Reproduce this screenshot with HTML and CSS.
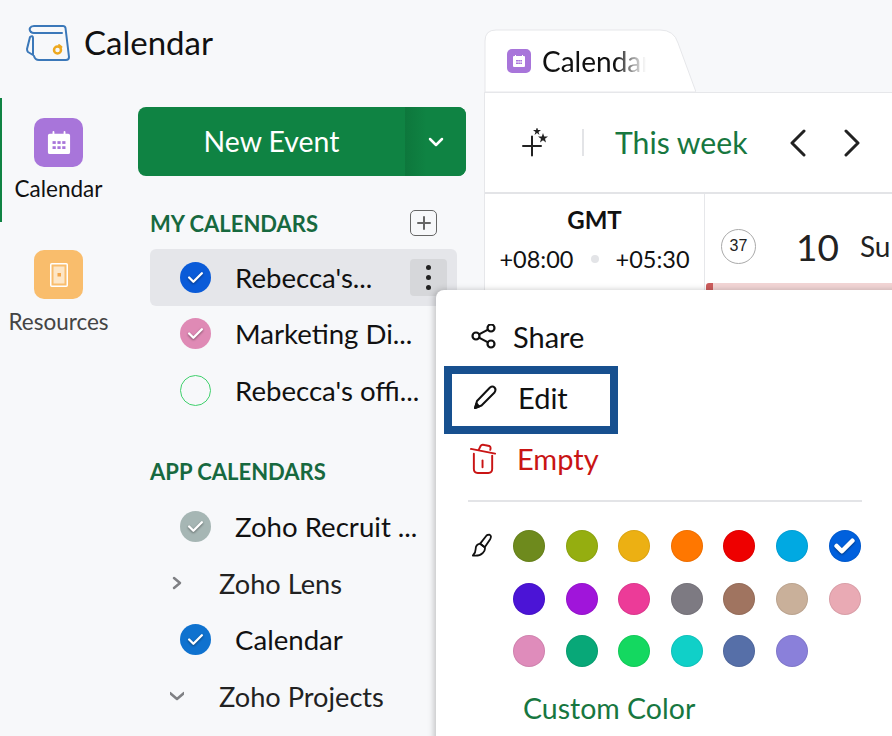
FILE: index.html
```html
<!DOCTYPE html>
<html>

<head>
    <meta charset="UTF-8">
    <title>Calendar</title>
    <link rel="stylesheet" href="styles.css">
</head>

<body>
    <div class="app">
        <div class="left">
            <div class="brand">
                <svg class="brand-logo" viewBox="0 0 44 38" width="44" height="38" fill="none" stroke="#3b78b9" stroke-width="2" stroke-linecap="round" stroke-linejoin="round">
                    <path d="M5 9Q3 7 4 5Q5 3 8 3H37Q39 3 39.500 5L43 34Q43 37 40 37H13Q9 37 8 33" />
                    <path d="M5 9Q6 10 8 10H36" />
                    <path d="M4 14L1 26Q1 28 2 29L7 32V15Q7 12 4 14Z" />
                    <circle cx="31.500" cy="27" r="3.500" stroke="#eda81f" stroke-width="2.500" />
                    <path d="M33 22L35.500 24" stroke="#eda81f" />
                </svg>
                <span class="brand-title">Calendar</span>
            </div>
            <div class="columns">
                <div class="rail">
                    <div class="rail-item active">
                        <div class="rail-icon purple">
                            <svg viewBox="0 0 26 26" width="24" height="24">
                                <path fill="#fff" d="M3 3H6V1Q6 0 7 0T8 1V3H18V1Q18 0 19 0T20 1V3H23Q25 3 25 5V23Q25 25 23 25H3Q1 25 1 23V5Q1 3 3 3Z" />
                                <g fill="#a875da">
                                    <rect x="6" y="11" width="3.500" height="3" />
                                    <rect x="11.300" y="11" width="3.500" height="3" />
                                    <rect x="16.500" y="11" width="3.500" height="3" />
                                    <rect x="6" y="16.500" width="3.500" height="3" />
                                    <rect x="11.300" y="16.500" width="3.500" height="3" />
                                    <rect x="16.500" y="16.500" width="3.500" height="3" />
                                </g>
                            </svg>
                        </div>
                        <span>Calendar</span>
                    </div>
                    <div class="rail-item">
                        <div class="rail-icon orange">
                            <svg viewBox="0 0 18 24" width="18" height="24">
                                <rect x="0.750" y="0.750" width="16.500" height="22.500" rx="1" fill="none" stroke="#fff" stroke-width="1.500" />
                                <rect x="3.500" y="3.500" width="11" height="17" fill="#fde6c6" />
                                <rect x="7.500" y="10" width="3.500" height="3.500" fill="#f4a64a" />
                            </svg>
                        </div>
                        <span class="muted">Resources</span>
                    </div>
                </div>
                <div class="panel">
                    <div class="new-event">
                        <span class="new-event-label">New Event</span>
                        <span class="new-event-arrow">
                            <svg viewBox="0 0 16 10" width="16" height="10" fill="none" stroke="#fff" stroke-width="2.500" stroke-linecap="round" stroke-linejoin="round"><path d="M2 2L8 8L14 2" /></svg>
                        </span>
                    </div>

                    <div class="section-head">
                        <span>MY CALENDARS</span>
                        <span class="add-box">
                            <svg viewBox="0 0 14 14" width="14" height="14" stroke="#666" stroke-width="2" stroke-linecap="round"><path d="M7 1V13M1 7H13" /></svg>
                        </span>
                    </div>
                    <div class="cal-row selected">
                        <span class="dot" style="background: #0a5bd8">
                            <svg class="tick" viewBox="0 0 16 12"><path d="M2 6L6 10L14 2" /></svg>
                        </span>
                        <span>Rebecca's...</span>
                        <span class="more"><i></i><i></i><i></i></span>
                    </div>
                    <div class="cal-row">
                        <span class="dot" style="background: #df8ab5">
                            <svg class="tick" viewBox="0 0 16 12"><path d="M2 6L6 10L14 2" /></svg>
                        </span>
                        <span>Marketing Di...</span>
                    </div>
                    <div class="cal-row">
                        <span class="dot empty"></span>
                        <span>Rebecca's offi...</span>
                    </div>

                    <div class="section-head second">
                        <span>APP CALENDARS</span>
                    </div>
                    <div class="cal-row">
                        <span class="dot" style="background: #a6b6b4">
                            <svg class="tick" viewBox="0 0 16 12"><path d="M2 6L6 10L14 2" /></svg>
                        </span>
                        <span>Zoho Recruit ...</span>
                    </div>
                    <div class="cal-row group">
                        <svg class="caret" viewBox="0 0 14 14" width="14" height="14"><path d="M4 2L10 7L4 12" /></svg>
                        <span>Zoho Lens</span>
                    </div>
                    <div class="cal-row">
                        <span class="dot" style="background: #0f72cf">
                            <svg class="tick" viewBox="0 0 16 12"><path d="M2 6L6 10L14 2" /></svg>
                        </span>
                        <span>Calendar</span>
                    </div>
                    <div class="cal-row group">
                        <svg class="caret" viewBox="0 0 14 14" width="14" height="14"><path d="M0 4L7 10L14 4" /></svg>
                        <span>Zoho Projects</span>
                    </div>
                </div>
            </div>
        </div>

        <div class="main">
            <div class="tabs">
                <div class="tab">
                    <svg class="tab-shape" viewBox="0 0 212 63" width="212" height="63">
                        <path d="M1 63V12Q1 1 12 1H176Q190 1 194 14L212 63Z" fill="#fff" stroke="#e6e7ea" />
                    </svg>
                    <span class="tab-icon">
                        <svg viewBox="0 0 14 14" width="14" height="14">
                            <path fill="#fff" d="M2 2H3V1H4V2H10V1H11V2H12Q13 2 13 3V12Q13 13 12 13H2Q1 13 1 12V3Q1 2 2 2Z" />
                            <path fill="#a875da" d="M4 6H6V7.500H4ZM6.200 6H8V7.500H6.200ZM8.300 6H10V7.500H8.300ZM4 8.500H6V10H4ZM6.200 8.500H8V10H6.200ZM8.300 8.500H10V10H8.300Z" />
                        </svg>
                    </span>
                    <span class="tab-text">Calendar</span>
                </div>
            </div>
            <div class="sheet">
                <div class="toolbar">
                    <svg class="sparkle" viewBox="0 0 28 30" width="28" height="30">
                        <path d="M11 8.500V27.500M2 18H20" stroke="#222" stroke-width="2" stroke-linecap="round" />
                        <path fill="#222" transform="translate(2 -1)" d="M14 0L15 3L18 3L15.500 5L16.500 8L14 6L11.500 8L12.500 5L10 3L13 3Z" />
                        <path fill="#222" transform="translate(-1 -1)" d="M23 6L24.200 9.500L28 9.500L25 11.800L26 15.500L23 13.200L20 15.500L21 11.800L18 9.500L21.800 9.500Z" />
                    </svg>
                    <span class="tool-sep"></span>
                    <span class="this-week">This week</span>
                    <svg class="nav-prev" viewBox="0 0 18 28" width="18" height="28" fill="none" stroke="#222" stroke-width="3" stroke-linecap="round" stroke-linejoin="round"><path d="M15 2L3 14L15 26" /></svg>
                    <svg class="nav-next" viewBox="0 0 18 28" width="18" height="28" fill="none" stroke="#222" stroke-width="3" stroke-linecap="round" stroke-linejoin="round"><path d="M3 2L15 14L3 26" /></svg>
                </div>
                <div class="week-head">
                    <div class="gmt">
                        <div class="gmt-title">GMT</div>
                        <div class="gmt-zones">
                            <span>+08:00</span>
                            <i></i>
                            <span>+05:30</span>
                        </div>
                    </div>
                    <div class="day">
                        <div class="day-line">
                            <span class="week-no">37</span>
                            <span class="day-num">10</span>
                            <span class="day-name">Su</span>
                        </div>
                        <div class="day-event"></div>
                    </div>
                </div>
            </div>
        </div>
    </div>

    <div class="popup">
        <div class="menu-item share">
            <svg viewBox="0 0 26 26" width="26" height="26" fill="none" stroke="#111" stroke-width="2.200">
                <circle cx="5" cy="12" r="3.500" />
                <circle cx="20" cy="4" r="3.500" />
                <circle cx="20" cy="20" r="3.500" />
                <path d="M8 10.400L17 5.600M8 13.600L17 18.400" />
            </svg>
            <span>Share</span>
        </div>
        <div class="menu-item edit">
            <svg viewBox="0 0 26 26" width="26" height="26" fill="none" stroke="#111" stroke-width="2" stroke-linejoin="round">
                <path d="M3 24L5 17L18 3.500Q20.500 1.500 22.500 3.500T22.500 8.500L9.500 21.500Z" />
                <path d="M3 24L7 22.500L4.500 19.500Z" fill="#111" />
            </svg>
            <span>Edit</span>
        </div>
        <div class="menu-item empty-item">
            <svg viewBox="0 0 28 32" width="27" height="31" fill="none" stroke="#c91414" stroke-width="2" stroke-linecap="round" stroke-linejoin="round">
                <path d="M1 6L26 11" />
                <path d="M9 7L11 3Q12 1 15 2L20 3Q22 4 21 7" />
                <path d="M4 11V27Q4 31 8 31H19Q23 31 23 27V13" />
                <path d="M13 18V25" />
            </svg>
            <span>Empty</span>
        </div>
        <div class="menu-sep"></div>
        <div class="colors">
            <svg class="brush" viewBox="0 0 22 26" width="20" height="25" fill="none" stroke="#111" stroke-width="2" stroke-linejoin="round">
                <path d="M19 1Q22 2 20 6L14 15L9 11L16 2Q17 1 19 1Z" />
                <path d="M9 11Q4 12 4 17Q4 21 1 24Q8 25 12 21Q15 18 14 15Z" />
            </svg>
            <div class="swatches">
                <span style="background: #6e8a1d"></span>
                <span style="background: #95ae10"></span>
                <span style="background: #ecb013"></span>
                <span style="background: #ff7700"></span>
                <span style="background: #ee0000"></span>
                <span style="background: #00a9e2"></span>
                <span style="background: #0060dd">
                    <svg class="tick bold" viewBox="0 0 16 12"><path d="M2 6L6 10L14 2" /></svg>
                </span>
                <span style="background: #4b14d6"></span>
                <span style="background: #a015da"></span>
                <span style="background: #ec3b98"></span>
                <span style="background: #7d7a82"></span>
                <span style="background: #a07460"></span>
                <span style="background: #c9b09a"></span>
                <span style="background: #e9aab4"></span>
                <span style="background: #df8cbb"></span>
                <span style="background: #08a878"></span>
                <span style="background: #14d860"></span>
                <span style="background: #10d0c8"></span>
                <span style="background: #566fa8"></span>
                <span style="background: #8a80da"></span>
            </div>
        </div>
        <div class="custom-color">Custom Color</div>
    </div>
</body>

</html>
```

FILE: styles.css
```css
* {
    box-sizing: border-box;
}

html,
body {
    height: 100%;
}

body {
    margin: 0;
    overflow: hidden;
    position: relative;
    background: #f7f8fa;
    color: #111;
    font-family: Lato, "Open Sans", sans-serif;
}

.app {
    display: flex;
    height: 736px;
}

.left {
    width: 484px;
    flex-shrink: 0;
}

/* brand */
.brand {
    display: flex;
    align-items: center;
    height: 98px;
    padding: 0 0 14px 26px;
}

.brand-logo {
    margin-right: 14px;
}

.brand-title {
    font-size: 33px;
}

.columns {
    display: flex;
}

/* icon rail */
.rail {
    width: 138px;
    flex-shrink: 0;
}

.rail-item {
    display: flex;
    flex-direction: column;
    align-items: center;
    height: 124px;
    margin-bottom: 8px;
    padding: 20px 23px 0 0;
    border-left: 2px solid transparent;
    font-size: 22.500px;
}

.rail-item.active {
    border-left-color: #0f8343;
}

.rail-icon {
    display: flex;
    align-items: center;
    justify-content: center;
    width: 49px;
    height: 49px;
    margin-bottom: 8px;
    border-radius: 10px;
}

.purple {
    background: #a875da;
}

.orange {
    background: #f9bd6c;
}

.muted {
    color: #444;
    margin-top: 1px;
}

/* calendars panel */
.panel {
    flex: 1;
    padding-top: 9px;
}

.new-event {
    display: flex;
    width: 328px;
    height: 69px;
    border-radius: 8px;
    background: #0f8343;
    color: #fff;
    font-size: 28.400px;
    overflow: hidden;
}

.new-event-label {
    display: flex;
    align-items: center;
    justify-content: center;
    width: 267px;
    padding-bottom: 2px;
}

.new-event-arrow {
    display: flex;
    align-items: center;
    justify-content: center;
    flex: 1;
    background: linear-gradient(to right, #0d773c, #0f8343 35%);
}

.section-head {
    display: flex;
    align-items: center;
    justify-content: space-between;
    width: 287px;
    height: 30px;
    margin: 32px 0 11px 12px;
    color: #17693f;
    font-size: 22px;
    font-weight: 700;
}

.section-head.second {
    margin-top: 38px;
    margin-bottom: 12px;
}

.add-box {
    display: flex;
    align-items: center;
    justify-content: center;
    width: 27px;
    height: 26px;
    border: 1px solid #666;
    border-radius: 5px;
}

.cal-row {
    display: flex;
    align-items: center;
    width: 307px;
    height: 56.500px;
    margin-left: 12px;
    padding-left: 30px;
    border-radius: 6px;
    font-size: 27.600px;
    white-space: nowrap;
}

.cal-row.selected {
    position: relative;
    background: #e5e6ea;
}

.cal-row.group {
    padding-left: 20px;
    color: #222;
    font-size: 27.200px;
}

.dot {
    display: flex;
    align-items: center;
    justify-content: center;
    width: 31px;
    height: 31px;
    margin-right: 24px;
    border-radius: 50%;
    flex-shrink: 0;
}

.dot.empty {
    border: 1px solid #3fd06c;
}

.tick {
    width: 17px;
    height: 13px;
    fill: none;
    stroke: #fff;
    stroke-width: 2.200;
    stroke-linecap: round;
    stroke-linejoin: round;
    filter: drop-shadow(0 1px 1px rgba(0, 0, 0, 0.45));
}

.tick.bold {
    width: 21px;
    height: 16px;
    stroke-width: 3.500;
}

.caret {
    margin-right: 35px;
    fill: none;
    stroke: #7f8084;
    stroke-width: 2.500;
    stroke-linecap: round;
    stroke-linejoin: round;
}

.more {
    display: flex;
    flex-direction: column;
    align-items: center;
    justify-content: center;
    gap: 5px;
    width: 37px;
    height: 37px;
    margin-left: auto;
    margin-right: 10px;
    border-radius: 4px;
    background: #d6d7da;
}

.more i {
    width: 5px;
    height: 5px;
    border-radius: 50%;
    background: #222;
}

/* main area */
.main {
    flex: 1;
    min-width: 0;
    overflow: hidden;
}

.tabs {
    height: 92px;
    padding-top: 29px;
}

.tab {
    position: relative;
    display: flex;
    align-items: center;
    height: 63px;
    padding-left: 23px;
}

.tab-shape {
    position: absolute;
    left: 0;
    top: 0;
}

.tab-icon {
    position: relative;
    display: flex;
    align-items: center;
    justify-content: center;
    width: 24px;
    height: 24px;
    margin-right: 11px;
    border-radius: 5px;
    background: #a875da;
}

.tab-text {
    position: relative;
    width: 104px;
    font-size: 28px;
    white-space: nowrap;
    overflow: hidden;
    -webkit-mask-image: linear-gradient(to right, #000 70%, transparent);
    mask-image: linear-gradient(to right, #000 70%, transparent);
}

.sheet {
    height: 644px;
    border-left: 1px solid #e6e7ea;
    border-top: 1px solid #e6e7ea;
    background: #fff;
}

.toolbar {
    display: flex;
    align-items: center;
    height: 101px;
    border-bottom: 2px solid #e3e4e7;
    padding-left: 36px;
}

.sparkle {
    margin-right: 33px;
}

.tool-sep {
    width: 2px;
    height: 27px;
    margin-right: 31px;
    background: #e3e4e7;
}

.this-week {
    margin: 0 41px 2px 0;
    color: #17773f;
    font-size: 30.200px;
}

.nav-prev {
    margin-right: 36px;
}

.week-head {
    display: flex;
}

.gmt {
    width: 220px;
    height: 100px;
    padding-top: 11px;
    border-right: 1px solid #e6e7ea;
    text-align: center;
    flex-shrink: 0;
}

.gmt-title {
    height: 38px;
    font-size: 24px;
    font-weight: 700;
}

.gmt-zones {
    display: flex;
    align-items: center;
    justify-content: center;
    gap: 17px;
    margin-top: 2px;
    font-size: 23.500px;
}

.gmt-zones i {
    width: 8px;
    height: 8px;
    border-radius: 50%;
    background: #e3e4e7;
}

.day {
    flex: 1;
    min-width: 0;
    white-space: nowrap;
}

.day-line {
    display: flex;
    align-items: center;
    height: 89px;
    padding-left: 16px;
    padding-top: 15px;
    color: #222;
}

.week-no {
    display: flex;
    align-items: center;
    justify-content: center;
    width: 35px;
    height: 35px;
    margin-right: 40px;
    border: 1px solid #aaa;
    border-radius: 50%;
    font-family: "Liberation Sans", sans-serif;
    font-size: 16px;
}

.day-num {
    margin-right: 21px;
    font-size: 37px;
}

.day-name {
    font-size: 28px;
}

.day-event {
    height: 8px;
    margin-left: 1px;
    border-left: 7px solid #cc5c5c;
    border-radius: 3px 0 0 0;
    background: #f2d5d5;
}

/* colour popup */
.popup {
    position: absolute;
    left: 436px;
    top: 290px;
    width: 470px;
    height: 460px;
    padding: 17px 0 0 32px;
    border-radius: 8px 0 0 0;
    background: #fff;
    box-shadow: -2px 0 6px rgba(0, 0, 0, 0.22);
}

.menu-item {
    display: flex;
    align-items: center;
    height: 61px;
    font-size: 29px;
}

.menu-item.share {
    padding: 0 0 2px 3px;
}

.menu-item.share svg {
    margin-right: 16px;
}

.menu-item.edit {
    width: 174px;
    height: 68px;
    margin: -2px 0 -4px -24px;
    padding: 0 0 6px 20px;
    border: 8px solid #17508f;
    position: relative;
}

.menu-item.edit svg {
    margin-right: 20px;
}

.menu-item.empty-item {
    padding: 0 0 4px 2px;
    color: #c91414;
}

.menu-item.empty-item svg {
    margin-right: 20px;
}

.menu-sep {
    width: 394px;
    height: 2px;
    margin-top: 9px;
    background: #e3e4e7;
}

.colors {
    display: flex;
    margin-top: 28px;
}

.brush {
    margin: 3px 21px 0 4px;
    flex-shrink: 0;
}

.swatches {
    display: grid;
    grid-template-columns: repeat(7, 32px);
    gap: 20.600px;
}

.swatches span {
    display: flex;
    align-items: center;
    justify-content: center;
    width: 32px;
    height: 32px;
    border-radius: 50%;
    box-shadow: inset 0 0 0 1px rgba(0, 0, 0, 0.07);
}

.custom-color {
    margin: 24px 0 0 55px;
    color: #17773f;
    font-size: 28.500px;
}
```
